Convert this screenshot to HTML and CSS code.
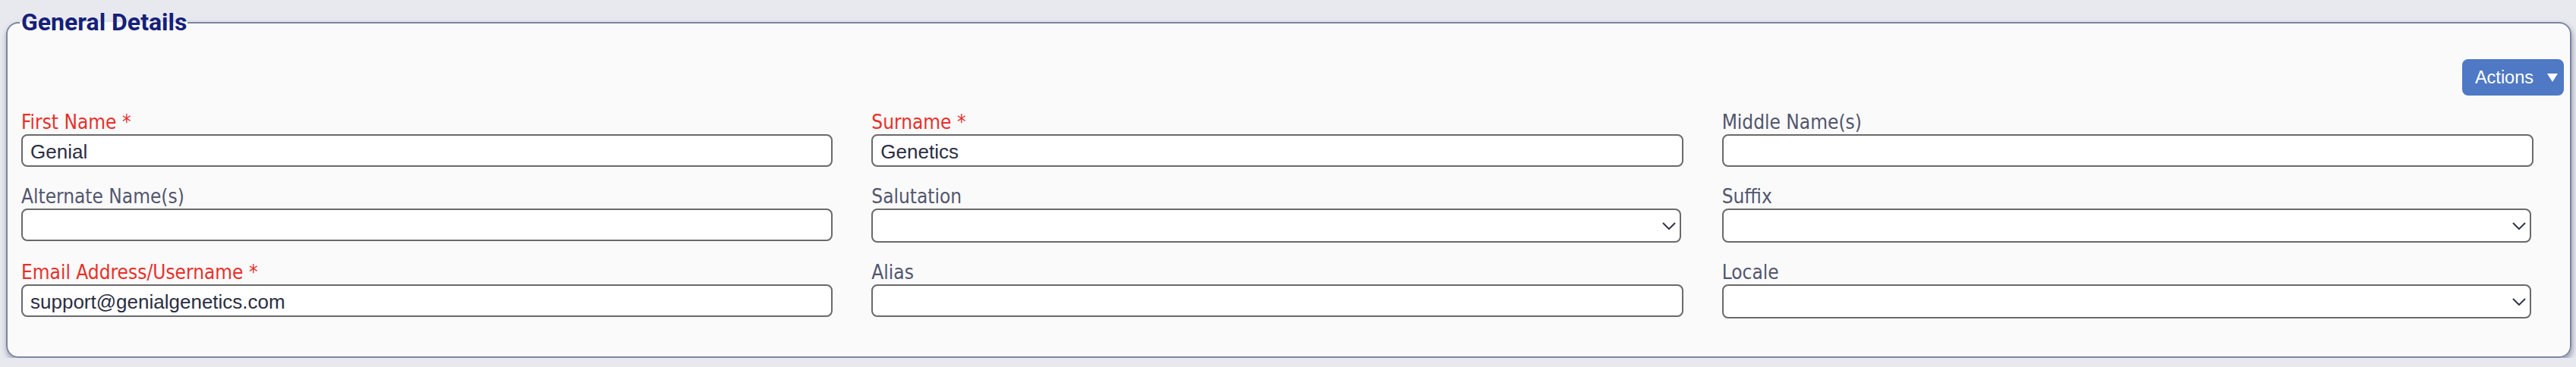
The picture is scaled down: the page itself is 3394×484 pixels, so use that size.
FILE: index.html
```html
<!DOCTYPE html>
<html lang="en">
<head>
<meta charset="utf-8">
<title>General Details</title>
<link rel="stylesheet" href="styles.css">
</head>
<body>
<div class="page">
  <fieldset class="panel">
    <legend class="panel-title">General Details</legend>
    <div class="toolbar">
      <button class="actions-btn" type="button">
        <span>Actions</span>
        <svg class="caret" width="14" height="11" viewBox="0 0 14 11"><polygon points="0,0 14,0 7,11" fill="#fff"/></svg>
      </button>
    </div>
    <div class="form-grid">
      <div class="field">
        <label class="lbl required">First Name *</label>
        <input class="txt" type="text" value="Genial">
      </div>
      <div class="field">
        <label class="lbl required">Surname *</label>
        <input class="txt" type="text" value="Genetics">
      </div>
      <div class="field">
        <label class="lbl">Middle Name(s)</label>
        <input class="txt" type="text" value="">
      </div>
      <div class="field">
        <label class="lbl">Alternate Name(s)</label>
        <input class="txt" type="text" value="">
      </div>
      <div class="field">
        <label class="lbl">Salutation</label>
        <div class="select-wrap">
          <select class="sel"><option></option></select>
          <svg class="chev" width="18" height="10" viewBox="0 0 18 10"><polyline points="1,1 9,9 17,1" fill="none" stroke="#33364a" stroke-width="2"/></svg>
        </div>
      </div>
      <div class="field">
        <label class="lbl">Suffix</label>
        <div class="select-wrap">
          <select class="sel"><option></option></select>
          <svg class="chev" width="18" height="10" viewBox="0 0 18 10"><polyline points="1,1 9,9 17,1" fill="none" stroke="#33364a" stroke-width="2"/></svg>
        </div>
      </div>
      <div class="field">
        <label class="lbl required">Email Address/Username *</label>
        <input class="txt" type="text" value="support@genialgenetics.com">
      </div>
      <div class="field">
        <label class="lbl">Alias</label>
        <input class="txt" type="text" value="">
      </div>
      <div class="field">
        <label class="lbl">Locale</label>
        <div class="select-wrap">
          <select class="sel"><option></option></select>
          <svg class="chev" width="18" height="10" viewBox="0 0 18 10"><polyline points="1,1 9,9 17,1" fill="none" stroke="#33364a" stroke-width="2"/></svg>
        </div>
      </div>
    </div>
  </fieldset>
</div>
</body>
</html>
```

FILE: styles.css
```css
html, body {
  margin: 0;
  padding: 0;
  background: #e8e9ee;
}

.page {
  padding: 11px 6px 0 8px;
}

.panel {
  margin: 0;
  padding: 30px 8px 50px 18px;
  border: 2px solid #7d85a1;
  border-radius: 16px;
  background: #fafafa;
  box-shadow: 1px 4px 7px rgba(70, 78, 120, 0.55);
  min-width: 0;
}

.panel-title {
  padding: 0 1px 0 2px;
  margin-left: -2px;
  font-family: Roboto, "Liberation Sans", sans-serif;
  font-weight: 700;
  font-size: 32px;
  line-height: 37px;
  color: #152079;
}

.toolbar {
  display: flex;
  justify-content: flex-end;
  margin-bottom: 20px;
}

.actions-btn {
  display: flex;
  align-items: center;
  gap: 18px;
  height: 48px;
  padding: 0 8px 0 17px;
  border: none;
  border-radius: 8px;
  background: #4f79c5;
  color: #fff;
  font-family: "Liberation Sans", Arial, sans-serif;
  font-size: 23.5px;
}

.caret {
  display: block;
}

.form-grid {
  display: grid;
  grid-template-columns: repeat(3, 1fr);
  column-gap: 51px;
  row-gap: 24px;
  margin-right: 40px;
}

.field {
  display: flex;
  flex-direction: column;
  min-width: 0;
}

.lbl {
  display: block;
  font-family: "DejaVu Sans Condensed", "DejaVu Sans", sans-serif;
  font-stretch: condensed;
  font-size: 26px;
  line-height: 30px;
  margin-bottom: 1px;
  color: #52566f;
  white-space: nowrap;
}

.lbl.required {
  color: #e8302a;
}

.txt,
.sel {
  box-sizing: border-box;
  width: 100%;
  height: 43px;
  margin: 0;
  border: 2px solid #6a6a6a;
  border-radius: 8px;
  background: #fff;
  font-family: "Liberation Sans", Arial, sans-serif;
  font-size: 26px;
  color: #2b2e42;
  outline: none;
}

.txt {
  padding: 4px 10px 0;
}

.select-wrap {
  position: relative;
  width: calc(100% - 3px);
}

.sel {
  -webkit-appearance: none;
  appearance: none;
  height: 45px;
  padding: 0 40px 0 10px;
}

.chev {
  position: absolute;
  right: 7px;
  top: 18px;
}
```
